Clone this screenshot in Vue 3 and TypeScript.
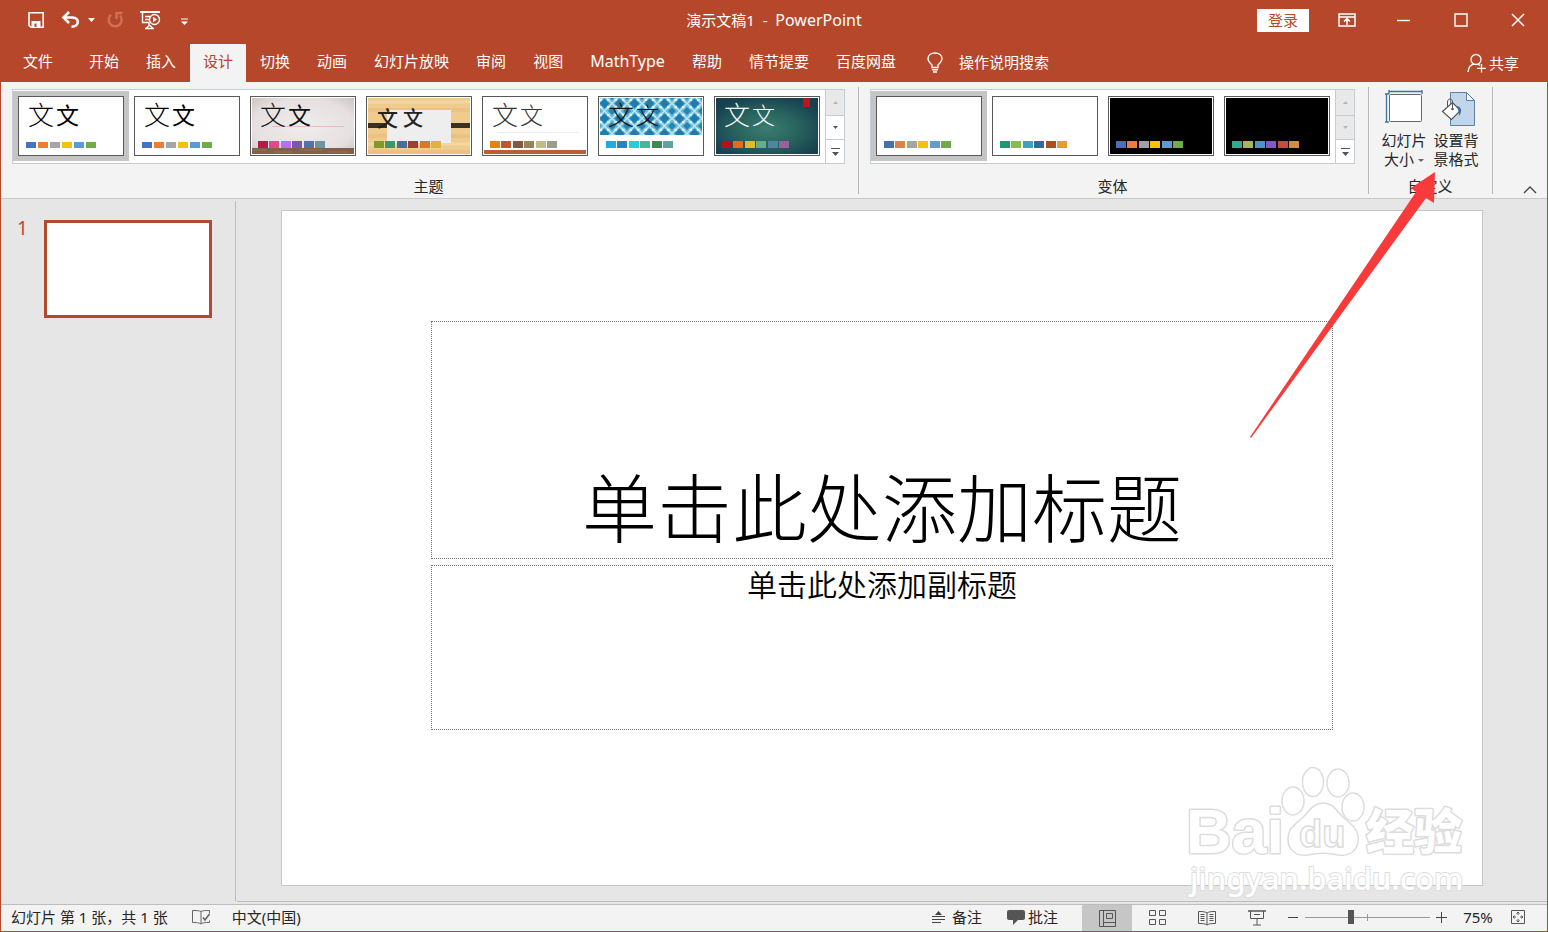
<script setup lang="ts">
import { ref } from 'vue'

interface Theme {
  name: string
  art: string
  ink: string
  colors: string[]
  step?: number
}

const tabs = ['开始', '插入', '设计', '切换', '动画', '幻灯片放映', '审阅', '视图', 'MathType', '帮助', '情节提要', '百度网盘']
const activeTab = ref('设计')

const office = ['#4472c4', '#ed7d31', '#a5a5a5', '#f5c20a', '#5b9bd5', '#70ad47']
const themes: Theme[] = [
  { name: '当前主题', art: 'plain', ink: '#000', colors: office, step: 12 },
  { name: 'Office 主题', art: 'plain', ink: '#000', colors: office, step: 12 },
  { name: '画廊', art: 'gallery', ink: '#111', colors: ['#b91a45', '#e8468c', '#b86ff5', '#7a58b0', '#5273a8', '#6d93a0'] },
  { name: '木材', art: 'wood', ink: '#222', colors: ['#83992a', '#3c9770', '#44709d', '#a23c33', '#d97828', '#deb340'] },
  { name: '回顾', art: 'retro', ink: '#333', colors: ['#e48312', '#bd582c', '#865640', '#9b8357', '#c2bc80', '#94a088'] },
  { name: '积分', art: 'integral', ink: '#111', colors: ['#1cade4', '#2683c6', '#27ced7', '#42ba97', '#3e8853', '#62a39f'] },
  { name: '离子', art: 'ion', ink: '#f2ffff', colors: ['#b31217', '#e56b1c', '#e3b92c', '#67ae88', '#51859f', '#9b5fa0'] },
]
const variants: Theme[] = [
  { name: '变体 1', art: 'plain', ink: '', colors: ['#4472a9', '#dc8149', '#a5a5a5', '#f0c20c', '#6699cc', '#70a84c'] },
  { name: '变体 2', art: 'plain', ink: '', colors: ['#219672', '#86bd4e', '#3aa5c0', '#2b6c9b', '#a84f24', '#e0a030'] },
  { name: '变体 3', art: 'black', ink: '', colors: ['#4b6cbf', '#ed7d3c', '#a5a0a5', '#ffc000', '#5b9bd5', '#70ad47'] },
  { name: '变体 4', art: 'black', ink: '', colors: ['#31ab8f', '#a4b959', '#4d93c5', '#8659c0', '#cc4a35', '#d68a3c'] },
]
const galleries = [
  { label: '主题', items: themes, canDown: true },
  { label: '变体', items: variants, canDown: false },
]
const selected = ref([0, 0])
const zoom = ref(36)

const swatchX = (t: Theme, i: number) => 6 + Math.round((i * (t.step ? t.step * 5 : 57)) / 5)
const isSans = (t: Theme) => t.art === 'plain' || t.art === 'gallery'
</script>

<template>
  <div class="window">
    <header class="header">
      <div class="titlebar">
        <div class="quick">
          <button class="qbtn save" aria-label="保存">
            <svg width="18" height="18" viewBox="0 0 18 18"><path d="M2 1.800h14.200v14.400H4L2 14.500z" fill="none" stroke="#fff" stroke-width="1.600" /><path d="M4.500 10h9v7H4.500z" fill="#fff" /><path d="M7.500 12.500h2V16h-2z" fill="#b7472a" /></svg>
          </button>
          <button class="qbtn undo" aria-label="撤消">
            <svg width="20" height="18" viewBox="0 0 20 18"><path d="M3 6.500h8.500c7 0 7.500 9-1 9.200" fill="none" stroke="#fff" stroke-width="2.600" /><path d="M8 1L2.500 6.500 8 12" fill="none" stroke="#fff" stroke-width="2.600" /></svg>
          </button>
          <button class="qbtn caret" aria-label="撤消列表">
            <svg width="7" height="4" viewBox="0 0 7 4"><path d="M0 0h7L3.500 4z" fill="#fff" /></svg>
          </button>
          <button class="qbtn redo" aria-label="重复">
            <svg width="18" height="18" viewBox="0 0 18 18"><path d="M5 3.800A6.500 6.500 0 1 0 14 4.500M10.500 8V2h6" fill="none" stroke="#d0705a" stroke-width="2.400" /></svg>
          </button>
          <button class="qbtn present" aria-label="从头开始">
            <svg width="21" height="20" viewBox="0 0 21 20" fill="none" stroke="#fff" stroke-width="1.400"><path d="M0 2h20" stroke-width="2" /><path d="M2.500 3v9.500h7M5 6.500h5M5 9.500h4M9 13v3M5 18.500h9M6.500 18l3-3 3 3" /><circle cx="14.500" cy="9.500" r="5" /><path d="M13 6.800v5.400l4-2.700z" fill="#fff" stroke="none" /></svg>
          </button>
          <button class="qbtn more" aria-label="自定义快速访问工具栏">
            <svg width="7" height="8" viewBox="0 0 7 8"><path d="M0 1h7" stroke="#fff" /><path d="M0 3.500h7L3.500 7z" fill="#fff" /></svg>
          </button>
        </div>
        <div class="doc-title">演示文稿1&nbsp; -&nbsp; <span class="latin">PowerPoint</span></div>
        <div class="window-tools">
          <button class="login">登录</button>
          <button class="wbtn" aria-label="功能区显示选项">
            <svg width="18" height="14" viewBox="0 0 18 14" fill="none" stroke="#fff" stroke-width="1.500"><path d="M1 1h16v12H1zM1 4h16M9 12V6M6 8.500l3-3 3 3" /></svg>
          </button>
          <button class="wbtn" aria-label="最小化"><svg width="14" height="14" viewBox="0 0 14 14"><path d="M0 7.500h13" stroke="#fff" stroke-width="1.400" /></svg></button>
          <button class="wbtn" aria-label="最大化"><svg width="14" height="14" viewBox="0 0 14 14"><path d="M1 1h12v12H1z" fill="none" stroke="#fff" stroke-width="1.400" /></svg></button>
          <button class="wbtn" aria-label="关闭"><svg width="14" height="14" viewBox="0 0 14 14"><path d="M1 1l12 12M13 1L1 13" stroke="#fff" stroke-width="1.500" /></svg></button>
        </div>
      </div>
      <nav class="tabs">
        <button class="tab file">文件</button>
        <button v-for="t in tabs" :key="t" class="tab" :class="{ active: t === activeTab, latin: t === 'MathType' }" @click="activeTab = t">{{ t }}</button>
        <button class="tell-me">
          <svg width="16" height="21" viewBox="0 0 16 21" fill="none" stroke="#fff" stroke-width="1.400"><path d="M5 15.500v-2.500C3.500 11 1 10 1 6.800 1 3.300 4 1 8 1s7 2.300 7 5.800c0 3.200-2.500 4.200-4 6.200v2.500zM5 17.800h6M6 20h4" /></svg>
          <span>操作说明搜索</span>
        </button>
        <button class="share">
          <svg width="20" height="20" viewBox="0 0 20 20" fill="none" stroke="#fff" stroke-width="1.300"><circle cx="9" cy="6.500" r="5" /><path d="M1 19c.5-5 3-7.500 6-8M11 11l2 1.500M14.500 11v8.500M10 15.300h9" /></svg>
          <span>共享</span>
        </button>
      </nav>
    </header>

    <section class="ribbon">
      <div v-for="(g, gi) in galleries" :key="g.label" class="group gallery-group">
        <div class="gallery">
          <button v-for="(t, i) in g.items" :key="t.name" class="cell" :class="{ selected: selected[gi] === i }" :aria-label="t.name" @click="selected[gi] = i">
            <span class="thumb">
              <svg width="102" height="56" viewBox="0 0 102 56">
                <template v-if="t.art === 'gallery'">
                  <defs><radialGradient id="wall" r="0.700"><stop offset="0" stop-color="#f0eded" /><stop offset="0.700" stop-color="#e6e0e0" /><stop offset="1" stop-color="#cdc4c2" /></radialGradient></defs>
                  <rect width="102" height="56" fill="url(#wall)" />
                  <path d="M20 28.500h72" stroke="#e3bcc4" />
                  <rect y="50" width="102" height="6" fill="#80604a" />
                  <path d="M0 52h14M22 54h18M48 52h22M76 54h20" stroke="#94734f" />
                </template>
                <template v-else-if="t.art === 'wood'">
                  <rect width="102" height="56" fill="#efcc8d" />
                  <path d="M0 12h102M0 38h102M0 54h102" stroke="#eac284" stroke-width="4" />
                  <path d="M0 4h102M0 46h102" stroke="#f4d79f" stroke-width="3" />
                  <rect y="25" width="22" height="5" fill="#3c3023" />
                  <rect x="81" y="25" width="21" height="5" fill="#3c3023" />
                  <rect x="19" y="12" width="64" height="33" fill="#eeeeef" />
                </template>
                <template v-else-if="t.art === 'retro'">
                  <path d="M14 34.500h80" stroke="#ececec" />
                  <rect y="52" width="102" height="4" fill="#b85f35" />
                </template>
                <template v-else-if="t.art === 'integral'">
                  <defs>
                    <pattern id="lattice" x="-3" y="-2" width="15" height="15" patternUnits="userSpaceOnUse">
                      <rect width="15" height="15" fill="#6dbcd8" />
                      <path d="M7.500 2.500l5 5-5 5-5-5z" fill="#1f7cae" />
                      <path d="M0 0h4L0 4zM15 0v4l-4-4zM0 15v-4l4 4zM15 15h-4l4-4z" fill="#2785b3" />
                      <path d="M7.500 0L15 7.500 7.500 15 0 7.500z" fill="none" stroke="#c5e9f2" stroke-width="1.200" />
                      <path d="M2.500 3.800h2.500M10 3.800h2.500M2.500 11.300h2.500M10 11.300h2.500" stroke="#eafafc" stroke-width="2" />
                    </pattern>
                  </defs>
                  <rect width="102" height="37" fill="url(#lattice)" />
                </template>
                <template v-else-if="t.art === 'ion'">
                  <defs><radialGradient id="glow" cx="0.500" cy="0.550" r="0.600"><stop offset="0" stop-color="#3b7d6f" /><stop offset="0.500" stop-color="#29645f" /><stop offset="1" stop-color="#17414f" /></radialGradient></defs>
                  <rect width="102" height="56" fill="url(#glow)" />
                  <rect x="87" width="7" height="9" fill="#b8161b" />
                </template>
                <rect v-else-if="t.art === 'black'" width="102" height="56" fill="#000" />
                <g v-if="t.ink" :fill="t.ink">
                  <template v-if="t.art === 'wood'">
                    <text x="9" y="28" font-size="21" font-weight="500">文</text>
                    <text x="35" y="28" font-size="20" font-weight="500">文</text>
                  </template>
                  <template v-else>
                    <text x="8" y="27" font-size="26" font-weight="300">文</text>
                    <text x="36" y="26" font-size="23" :font-weight="isSans(t) ? 400 : 300">文</text>
                  </template>
                </g>
                <rect v-for="(c, ci) in t.colors" :key="ci" :x="swatchX(t, ci)" :y="t.step ? 44 : 43" width="10" :height="t.step ? 6 : 7" :fill="c" />
              </svg>
            </span>
          </button>
          <div class="scroller">
            <button disabled aria-label="上一行"><svg width="5" height="3" viewBox="0 0 5 3"><path d="M0 3h5L2.500 0z" fill="#b5b5b5" /></svg></button>
            <button :disabled="!g.canDown" aria-label="下一行"><svg width="5" height="3" viewBox="0 0 5 3"><path d="M0 0h5L2.500 3z" :fill="g.canDown ? '#555' : '#b5b5b5'" /></svg></button>
            <button aria-label="其他"><svg width="9" height="8" viewBox="0 0 9 8"><path d="M0 .5h9" stroke="#555" stroke-width="1" /><path d="M1 4h7L4.500 8z" fill="#555" /></svg></button>
          </div>
        </div>
        <div class="group-label">{{ g.label }}</div>
      </div>

      <div class="group custom-group">
        <div class="big-buttons">
          <button class="big">
            <svg width="40" height="38" viewBox="-1 -1 40 38"><path d="M4 1.500h33M4 0v4M37 0v4M1.500 4v28M0 4h4M0 32h4" fill="none" stroke="#41719c" stroke-width="1.300" /><rect x="4.500" y="4.500" width="32" height="27" rx="1" fill="#fff" stroke="#666" /></svg>
            <span>幻灯片<br />大小<svg class="drop" width="6" height="3" viewBox="0 0 6 3"><path d="M0 0h6L3 3z" fill="#666" /></svg></span>
          </button>
          <button class="big">
            <svg width="40" height="38" viewBox="-2 0 40 38"><path d="M12.500 3.500h16l8 8v25h-24z" fill="#c3d5e8" stroke="#5b7fa5" /><path d="M28.500 3.500v8h8z" fill="#fff" stroke="#5b7fa5" /><path d="M4.500 22.500l10-9 8 8-9 9z" fill="#fff" stroke="#555" stroke-width="1.200" /><path d="M9.500 18v-5c0-4 5-4 5 0v7" fill="none" stroke="#555" /><circle cx="14.500" cy="20" r="1.300" fill="#555" /><path d="M19 17c5 1 5 6 2 10 0-4-1-7-2-10z" fill="#2e6ca5" /></svg>
            <span>设置背<br />景格式</span>
          </button>
        </div>
        <div class="group-label">自定义</div>
      </div>
      <button class="collapse" aria-label="折叠功能区"><svg width="14" height="8" viewBox="0 0 14 8"><path d="M1 7l6-6 6 6" fill="none" stroke="#444" stroke-width="1.300" /></svg></button>
    </section>

    <main class="workspace">
      <aside class="slides">
        <span class="number">1</span>
        <button class="slide-thumb" aria-label="幻灯片 1"></button>
      </aside>
      <section class="stage">
        <div class="slide">
          <h1 class="placeholder title">单击此处添加标题</h1>
          <p class="placeholder subtitle">单击此处添加副标题</p>
        </div>
        <svg class="watermark" width="300" height="146" viewBox="10 4 300 146">
          <g fill="#fff" stroke="#dcdcdc" stroke-width="3" stroke-linejoin="round" paint-order="stroke">
            <text x="16" y="103" class="wm-latin" font-size="63">Bai</text>
            <text x="196" y="99" class="wm-cjk" font-size="48">经验</text>
          </g>
          <g fill="#fff" stroke="#dcdcdc" stroke-width="1.500">
            <ellipse cx="123" cy="51" rx="11" ry="14" />
            <ellipse cx="143" cy="32" rx="10.500" ry="14.500" />
            <ellipse cx="168" cy="33" rx="11" ry="14" />
            <ellipse cx="183" cy="57" rx="11" ry="14" />
            <path d="M153 53c11 0 14 9 22 16 9 7 14 12 13 22s-9 16-20 14c-9-2-21-2-30 0-11 2-20-5-20-15 0-11 5-14 13-21s12-16 22-16z" />
            <text x="129" y="97" class="wm-latin" font-size="38">du</text>
          </g>
          <text x="20" y="140" class="wm-url" font-size="31" fill="#fff" stroke="#dedede" stroke-width="2" paint-order="stroke">jingyan.baidu.com</text>
        </svg>
      </section>
    </main>

    <footer class="status">
      <span class="count">幻灯片 第 1 张，共 1 张</span>
      <button class="sbtn book" aria-label="拼写检查"><svg width="19" height="16" viewBox="0 0 19 16" fill="none" stroke="#666"><path d="M9 2.500C7 1.500 4 1.500.5 1.500v12c3.500 0 6.500 0 8.500 1.500M9 2.500c2-1 4-1 8.500-1v3M9 2.500V15c1.500-1.500 4-1.500 8.500-1.500v-2" /><path d="M11 8.500l2 2.500 4.500-6" stroke-width="1.600" /></svg></button>
      <button class="sbtn">中文(中国)</button>
      <button class="sbtn notes"><svg width="15" height="14" viewBox="0 0 15 14"><path d="M4 5h7L7.500 1z" fill="#444" /><path d="M1 6.500h13M1 9.500h13M1 12.500h9" stroke="#444" /></svg>备注</button>
      <button class="sbtn comments"><svg width="18" height="16" viewBox="0 0 18 16"><path d="M2 1h14q2 0 2 2v6q0 2-2 2h-5l-5 5v-5H2q-2 0-2-2V3q0-2 2-2z" fill="#555" /></svg>批注</button>
      <div class="views">
        <button class="view on" aria-label="普通"><svg width="19" height="17" viewBox="0 0 19 17" fill="none" stroke="#555"><path d="M1.500.5h16v16h-16zM5.500.5v16M5.500 12.500h12M8.500 3.500h6v5h-6z" /></svg></button>
        <button class="view" aria-label="幻灯片浏览"><svg width="17" height="16" viewBox="0 0 17 16" fill="none" stroke="#555"><path d="M.5.5h6v5h-6zM10.500.5h6v5h-6zM.5 9.500h6v5h-6zM10.500 9.500h6v5h-6z" /></svg></button>
        <button class="view" aria-label="阅读视图"><svg width="18" height="15" viewBox="0 0 18 15" fill="none" stroke="#555"><path d="M9 2C7 .5 4 .5.5.5v12c3.500 0 6.500 0 8.500 1.500 2-1.500 5-1.500 8.500-1.500V.500C14 .5 11 .5 9 2zM9 2v12M2.500 3.500h4M2.500 5.500h4M2.500 7.500h4M2.500 9.500h4M11.500 3.500h4M11.500 5.500h4M11.500 7.500h4M11.500 9.500h4" /></svg></button>
        <button class="view" aria-label="幻灯片放映"><svg width="18" height="16" viewBox="0 0 18 16" fill="none" stroke="#555"><path d="M0 1h18" stroke-width="1.500" /><path d="M2.500 1v7.500h13V1M6 4.500h6M9 9v6M5 15h8" /></svg></button>
      </div>
      <button class="sbtn zoom-step" aria-label="缩小"><svg width="11" height="11" viewBox="0 0 11 11"><path d="M0 5.500h10" stroke="#444" /></svg></button>
      <input v-model.number="zoom" class="zoom" type="range" min="0" max="100" aria-label="显示比例" />
      <button class="sbtn zoom-step" aria-label="放大"><svg width="11" height="11" viewBox="0 0 11 11"><path d="M0 5.500h11M5.500 0v11" stroke="#444" /></svg></button>
      <button class="sbtn percent">75%</button>
      <button class="sbtn fit" aria-label="适应窗口"><svg width="14" height="14" viewBox="0 0 14 14" fill="none" stroke="#555"><path d="M.5.5h13v13H.5zM7 2v3M5.500 3.500L7 2l1.500 1.500M7 9v3M5.500 10.500L7 12l1.500-1.500M2 7h3M3.500 5.500L2 7l1.500 1.500M9 7h3M10.500 5.500L12 7l-1.500 1.500" /></svg></button>
    </footer>

    <svg class="pointer" width="200" height="280" viewBox="0 0 200 280"><path d="M189 11L165 27l5 4L4 276l1 1L180 37l8 5z" fill="#f93a3a" /></svg>
  </div>
</template>

<style>
body {
  margin: 0;
}
</style>

<style scoped>
.window {
  position: relative;
  box-sizing: border-box;
  display: flex;
  flex-direction: column;
  min-height: 100vh;
  min-width: 1500px;
  border: 1px solid #b7472a;
  border-top: 0;
  background: #e6e6e6;
  color: #262626;
  font-family: "Noto Sans", "Noto Sans CJK SC", sans-serif;
  font-size: 15px;
  line-height: 20px;
}
button {
  display: flex;
  align-items: center;
  justify-content: center;
  padding: 0;
  border: 0;
  background: none;
  color: inherit;
  font: inherit;
  white-space: nowrap;
}
svg {
  display: block;
  flex: none;
}
.latin {
  font-size: 16px;
}
.header {
  background: #b7472a;
  color: #fff;
}
.titlebar {
  display: grid;
  grid-template-columns: 1fr auto 1fr;
  align-items: center;
  height: 40px;
  margin-bottom: 4px;
}
.quick {
  display: flex;
  align-items: center;
  padding-left: 26px;
}
.undo { margin-left: 16px; }
.caret { margin-left: 7px; }
.redo { margin-left: 11px; }
.present { margin-left: 16px; }
.more { margin-left: 20px; padding-top: 4px; }
.window-tools {
  display: flex;
  align-items: center;
  justify-content: flex-end;
  padding-right: 1px;
}
.login {
  width: 52px;
  height: 23px;
  margin-right: 9px;
  background: #fff;
  color: #b7472a;
}
.wbtn {
  width: 57px;
  height: 40px;
}
.tabs {
  display: flex;
  gap: 1px;
  height: 38px;
  padding-left: 9px;
}
.tab {
  padding: 0 13px 4px;
}
.file {
  margin-right: 9px;
}
.tab.active {
  background: #f3f3f3;
  color: #b7472a;
}
.tell-me {
  gap: 16px;
  margin-left: 17px;
  padding-bottom: 2px;
}
.share {
  gap: 2px;
  margin-left: auto;
  padding-right: 28px;
}
.ribbon {
  display: flex;
  box-sizing: border-box;
  height: 117px;
  padding-top: 5px;
  border-bottom: 1px solid #c8c8c8;
  background: #f3f3f3;
}
.group {
  display: flex;
  flex-direction: column;
  justify-content: space-between;
  align-items: center;
  box-sizing: border-box;
  height: 107px;
  border-right: 1px solid #b8b8b8;
}
.gallery-group {
  padding: 2px 13px 0 11px;
}
.group-label {
  margin-bottom: 1px;
  line-height: 14px;
}
.gallery {
  display: flex;
  border: 1px solid #c5cdd3;
  background: #fff;
}
.cell {
  box-sizing: border-box;
  width: 116px;
  height: 70px;
  margin: 1px 0 2px;
}
.cell.selected {
  background: #c5c5c5;
}
.thumb {
  padding: 1px;
  border: 1px solid #595959;
  background: #fff;
}
.scroller {
  display: grid;
  grid-template-rows: 25px 24px 24px;
  box-sizing: border-box;
  width: 19px;
  border-left: 1px solid #c5cdd3;
}
.scroller button + button {
  border-top: 1px solid #c5cdd3;
}
.scroller button:disabled {
  background: #e9e9e9;
}
.custom-group {
  padding: 0 10px 0 9px;
}
.big-buttons {
  display: flex;
  padding-top: 2px;
}
.big {
  flex-direction: column;
  gap: 4px;
  width: 52px;
  line-height: 19px;
}
.drop {
  display: inline-block;
  margin: 0 0 3px 4px;
}
.collapse {
  align-self: flex-end;
  margin: 0 10px 4px auto;
}
.workspace {
  display: flex;
  flex: 1;
}
.slides {
  display: flex;
  align-items: flex-start;
  box-sizing: border-box;
  width: 235px;
  margin: 2px 0 3px;
  padding: 19px 0 0 16px;
  border-right: 1px solid #bdbdbd;
}
.number {
  width: 27px;
  color: #c0452c;
  font-size: 19px;
  line-height: 16px;
}
.slide-thumb {
  box-sizing: border-box;
  width: 168px;
  height: 98px;
  border: 3px solid #b04a30;
  background: #fff;
}
.stage {
  position: relative;
  flex: 1;
  margin: 0 0 2px 1px;
  padding: 11px 64px 14px 44px;
  border-bottom: 1px solid #bdbdbd;
}
.slide {
  display: grid;
  grid-template-rows: 110fr 238fr 6fr 166fr 155fr;
  box-sizing: border-box;
  aspect-ratio: 16 / 9;
  padding: 0 149px;
  border: 1px solid #c6c6c6;
  background: #fff;
  color: #000;
  text-align: center;
}
.placeholder {
  margin: 0;
  border: 1px dotted #777;
}
.title {
  grid-row: 2;
  display: flex;
  align-items: flex-end;
  justify-content: center;
  padding-bottom: 8px;
  font-size: 75px;
  font-weight: 300;
  line-height: 84px;
}
.subtitle {
  grid-row: 4;
  font-size: 30px;
  font-weight: 350;
  line-height: 38px;
}
.watermark {
  position: absolute;
  right: 67px;
  bottom: 1px;
}
.wm-latin {
  font-family: "Liberation Sans", sans-serif;
  font-weight: 700;
}
.wm-cjk {
  font-family: "Noto Sans CJK SC", sans-serif;
  font-weight: 900;
}
.wm-url {
  font-family: "Noto Sans", sans-serif;
  font-weight: 500;
}
.status {
  display: flex;
  align-items: stretch;
  box-sizing: border-box;
  height: 27px;
  padding-left: 10px;
  border-top: 1px solid #bdbdbd;
  background: #f3f3f3;
  line-height: 24px;
}
.sbtn {
  padding-bottom: 2px;
}
.book {
  margin: 0 21px 0 24px;
}
.notes {
  gap: 6px;
  margin-left: auto;
}
.comments {
  gap: 3px;
  margin-left: 25px;
}
.views {
  display: flex;
  margin-left: 24px;
}
.view {
  width: 50px;
}
.view.on {
  background: #c6c6c6;
}
.zoom-step {
  width: 11px;
  margin-left: 6px;
}
.zoom {
  appearance: none;
  width: 125px;
  height: 24px;
  margin: 0 0 0 6px;
  background:
    linear-gradient(#999, #999) 62px 50% / 1px 7px no-repeat,
    linear-gradient(#999, #999) 0 50% / 100% 1px no-repeat;
}
.zoom::-webkit-slider-thumb {
  appearance: none;
  width: 6px;
  height: 14px;
  background: #555;
}
.percent {
  width: 32px;
  margin-left: 15px;
}
.fit {
  margin: 0 22px 0 17px;
}
.pointer {
  position: absolute;
  top: 161px;
  right: 101px;
  pointer-events: none;
}
</style>
